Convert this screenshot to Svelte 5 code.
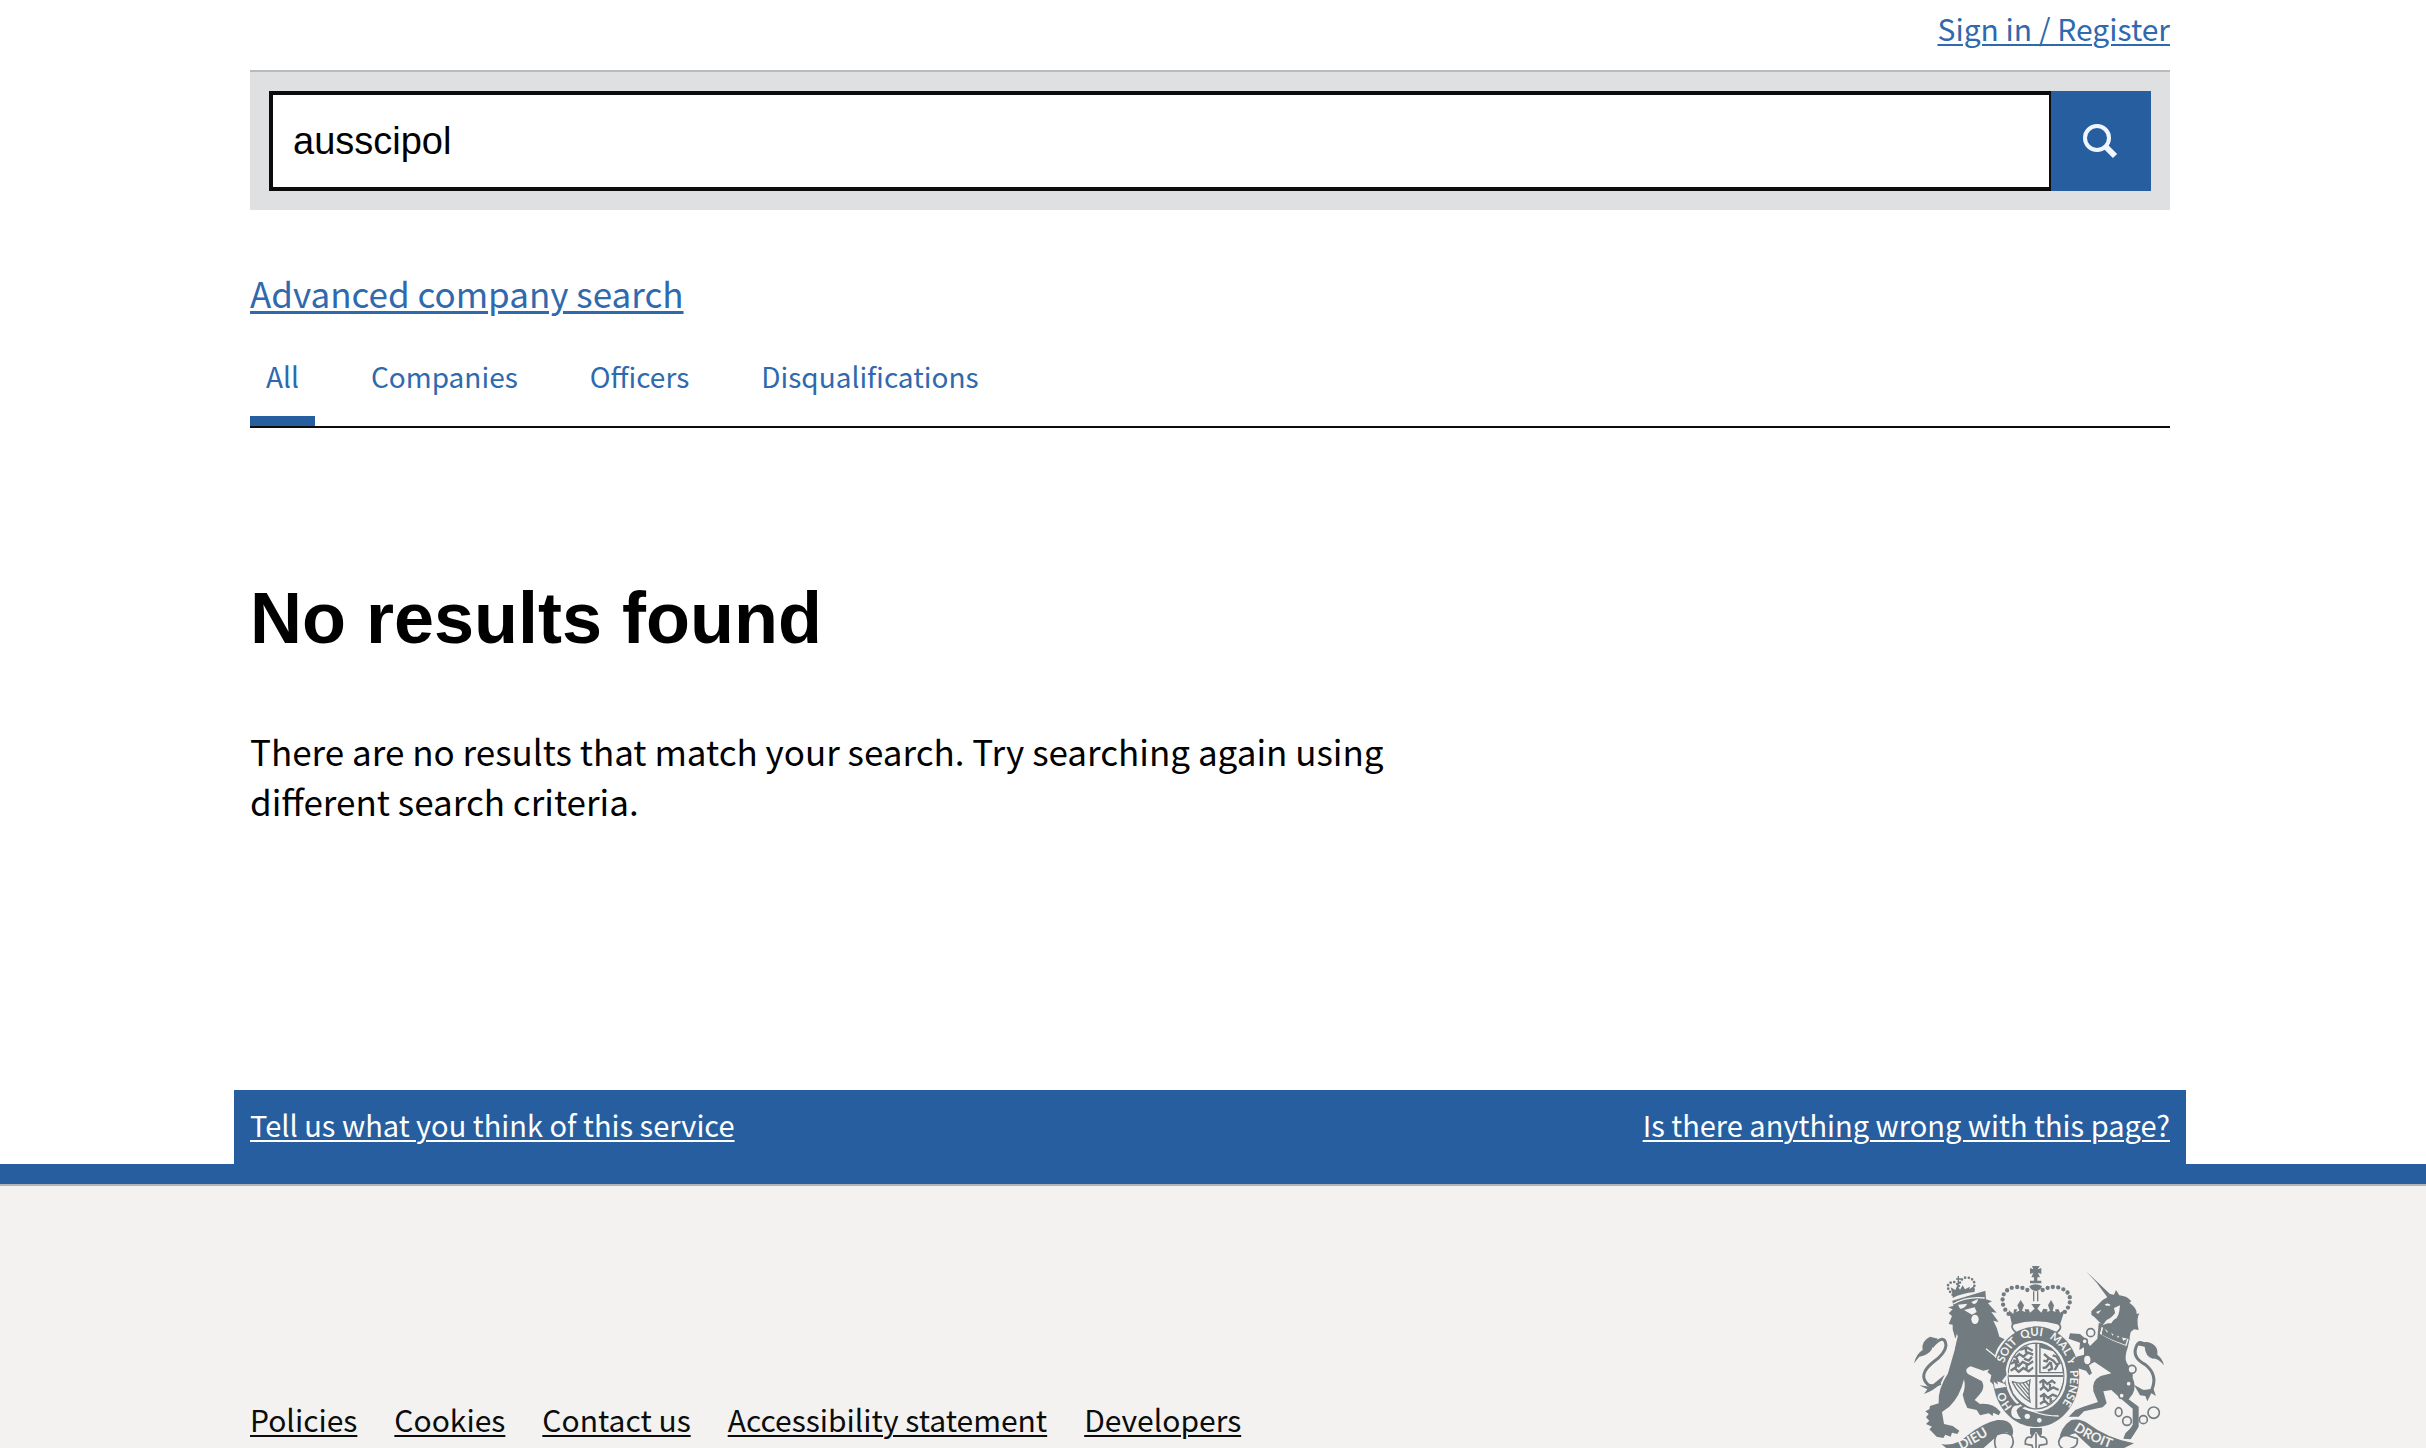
<script lang="ts">
	let searchTerm = $state('ausscipol');

	const tabs = ['All', 'Companies', 'Officers', 'Disqualifications'];
	let activeTab = $state('All');

	const footerLinks = ['Policies', 'Cookies', 'Contact us', 'Accessibility statement', 'Developers'];
</script>

<div class="page">
	<div class="gutter">
		<div class="container">
			<div class="account"><a href="#signin">Sign in / Register</a></div>

			<form class="search" onsubmit={(e) => e.preventDefault()}>
				<input type="text" aria-label="Search the register" bind:value={searchTerm} />
				<button aria-label="Search">
					<svg viewBox="0 0 40 40" width="40" height="40" fill="none" stroke="#f0f6ff">
						<circle cx="16" cy="17" r="12" stroke-width="4" />
						<path d="M25 26L34 35" stroke-width="6" />
					</svg>
				</button>
			</form>

			<a class="advanced" href="#advanced">Advanced company search</a>

			<nav class="tabs">
				{#each tabs as tab}
					<a href="#{tab}" class:active={tab === activeTab} onclick={() => (activeTab = tab)}>{tab}</a>
				{/each}
			</nav>

			<main>
				<h1>No results found</h1>
				<p>There are no results that match your search. Try searching again using different search criteria.</p>
			</main>
		</div>

		<div class="feedback">
			<a href="#feedback">Tell us what you think of this service</a>
			<a href="#problem">Is there anything wrong with this page?</a>
		</div>
	</div>

	<footer>
		<div class="gutter">
			<div class="container footer-row">
				<ul>
					{#each footerLinks as link}
						<li><a href="#footer">{link}</a></li>
					{/each}
				</ul>
				<svg class="crest" viewBox="102 78 750 546" width="250" height="182" role="img" aria-label="Royal coat of arms">
					<defs>
						<path id="garter" d="M402 505A102 124 0 1 1 528 512" />
						<path id="motto-left" d="M243 630Q300 604 352 566" />
						<path id="motto-right" d="M580 570Q636 608 712 632" />
					</defs>

					<!-- lion -->
					<path class="ink" d="M217 182L316 152L318 178L336 184L324 190L350 218L334 216L356 246L340 242Q352 262 358 290L374 298Q348 322 344 352L376 384L380 404L366 424L374 434L352 424L354 434L342 428L344 438L330 424L334 406L322 396L328 388L310 392L272 379Q250 388 264 402L306 424Q316 444 300 462L284 480L300 492Q340 488 362 516L356 526L340 518L338 528L326 520L300 526L290 510L262 504L254 486L248 464Q258 440 252 418Q240 470 208 500L186 516L192 552L218 558L238 572L232 582L216 578L212 590L196 584L190 594L170 590L148 568L156 560L138 552L148 542L138 532L146 522L136 514L148 508L150 498L176 490Q172 450 204 400L224 330L232 278L226 296L218 268L218 254L206 252L216 228L206 220L218 208L204 202L220 198Z" />
					<path class="tail" d="M156 320Q194 278 198 316Q196 340 160 366Q112 404 144 434Q156 442 182 430" />
					<path class="ink" d="M102 370Q110 340 128 330Q122 304 150 290L174 296Q160 312 154 330Q144 346 118 350ZM118 436L150 440L194 404L182 430Q162 452 132 462L142 448Z" />
					<path class="paper" d="M234 194L262 191Q254 206 240 206ZM274 186L294 177Q292 192 280 192ZM252 210L284 202L290 216L276 224L262 216Z" />
					<ellipse class="paper" cx="285" cy="238" rx="11" ry="14" />
					<path class="gap" d="M318 326L350 352M232 286Q220 340 208 360M220 192Q260 168 314 174" />

					<!-- lion's crown -->
					<path class="ink" d="M218 164L212 142L226 150L232 136L240 149L248 136L255 148L270 140L268 148L282 138L284 156Q244 160 218 174Z" />
					<path class="beads" d="M218 164Q192 138 212 128Q228 120 236 140Q242 112 262 112Q292 118 280 150" />
					<path class="stroke" d="M235 108V134M228 117H244" />

					<!-- crown -->
					<path class="ink" d="M456 78H479L473 88L484 84V102L474 98L480 112H454L460 98L450 102V84L460 88ZM462 110H472V122H484V130H450V122H462ZM448 138Q466 128 486 138Q484 150 468 154Q450 150 448 138Z" />
					<path class="beads big" d="M442 150Q422 138 400 142Q356 154 372 204L386 222M488 150Q510 138 534 142Q582 154 566 200L550 222" />
					<path class="stroke" d="M461 154V184M473 154V184" />
					<path class="ink" d="M386 210L400 222L402 208L412 208L408 216L418 212L412 196L422 180L432 196L426 212L436 216L434 208L446 208L450 218L464 206L454 192H482L472 206L484 218L490 206L502 208L502 216L510 212L504 196L513 180L522 196L518 212L526 216L526 208L536 208L540 218L554 210L540 254Q468 234 396 254Z" />
					<path class="outline" d="M408 278Q386 258 404 250Q468 232 532 250Q552 260 530 278Q468 258 408 278Z" />

					<!-- shield inside the garter -->
					<ellipse class="ink" cx="468" cy="410" rx="130" ry="151" />
					<ellipse class="ring" cx="468" cy="408" rx="89" ry="104" />
					<clipPath id="shield"><ellipse cx="468" cy="408" rx="82" ry="97" /></clipPath>
					<g clip-path="url(#shield)">
						<path class="paper" d="M382 312H462V404H382ZM482 324L520 334L544 366L548 396H482ZM382 412H462V508Q420 490 400 460ZM476 414H552V420L522 500L476 508Z" />
						<path class="beast" d="M396 346L408 352L418 342L430 350L444 338L460 344M400 360L414 366L410 354M432 356L446 362L456 350M390 372L404 366L416 378L428 366L444 374L460 364M392 392L404 384L416 396L430 384L446 394L460 382M408 384V372M440 386V374M420 330L440 322L458 332M438 322V338" />
						<path class="beast" d="M492 342L506 354L500 364L490 362M506 354L520 362L532 376L524 390M512 366L498 382L488 384M512 366L516 386L504 392M528 376L540 368L530 350L518 346" />
						<path class="beast" d="M478 428L490 420L502 432L516 422L526 430M480 450L492 440L504 452L520 442L536 450M480 470L492 462L504 474L518 464L532 470M480 492L494 482L506 494L522 482M490 420V440M510 432V446M492 462V480M512 474V486" />
						<path class="stroke" d="M396 424Q424 436 450 420Q444 460 450 486Q418 468 396 424M408 430L446 476M418 430L448 466M428 428L448 454M438 426L448 440" />
						<path class="cross" d="M384 408H552M469 312V508" />
						<path class="cross-line" d="M384 408H552M469 312V508" />
					</g>
					<text class="garter"><textPath href="#garter" startOffset="6">HO</textPath></text>
					<text class="garter"><textPath href="#garter" startOffset="144">SOIT</textPath></text>
					<text class="garter"><textPath href="#garter" startOffset="236">QUI</textPath></text>
					<text class="garter"><textPath href="#garter" startOffset="320">MAL</textPath></text>
					<text class="garter"><textPath href="#garter" startOffset="402">Y</textPath></text>
					<text class="garter"><textPath href="#garter" startOffset="438">PENSE</textPath></text>
					<path class="paper" d="M336 384L352 372L386 400L372 430L380 440L344 446Z" />
					<path class="ink" d="M318 360L344 352L376 384L380 404L366 422L374 432L352 424L354 434L340 424L330 380Z" />
					<path class="gap" d="M426 500Q480 528 536 528" />
					<path class="outline" d="M392 510Q396 492 414 494Q424 486 430 500Q418 502 412 512Q416 528 428 538Q412 542 402 536Q388 530 392 510Z" />
					<circle class="paper" cx="442" cy="529" r="8" />
					<circle class="paper" cx="478" cy="541" r="7" />

					<!-- unicorn -->
					<path class="ink" d="M618 94L690 162L702 164L708 150L718 166Q742 168 754 184L748 188Q772 204 770 222L778 220Q768 236 776 270L762 268L752 276L744 320Q732 352 740 368Q762 396 758 414Q770 440 758 462L746 478L776 500L776 560L764 580L752 598L730 596L736 580L750 566L758 554L758 506L718 472L694 450L670 454L680 490L668 502L612 514L596 530H566L586 510L610 500L654 486L640 454Q634 422 662 408L694 400L644 366L626 374L636 400L628 406L618 392L598 386L576 376L590 350L612 344L612 322L598 330L600 308L566 296L570 280L600 282L614 294L630 318L652 296L656 250L694 250L718 214L720 196L702 204L706 222L676 252L660 248L644 232L634 224V214L644 204L668 180L682 172L650 128Z" />
					<path class="paper" d="M674 194Q686 186 692 196Q682 200 674 194ZM648 216L664 210L654 222ZM712 204Q722 216 710 234Q692 248 668 256L680 240Q704 230 712 204Z" />
					<path class="collar" d="M664 258Q700 288 748 296L740 320Q696 306 658 282Z" />
					<path class="ink" d="M666 276L670 262L682 278L686 262L698 288L704 272L714 294L722 284L730 302L742 296L736 314Q698 302 666 284Z" />
					<path class="tail" d="M812 330Q778 290 768 322Q756 352 796 374Q834 404 816 448Q806 464 786 452" />
					<path class="ink" d="M772 316Q786 304 802 306Q836 314 832 344Q848 356 852 376Q834 354 818 356Q796 350 794 320ZM762 434L790 450L820 446L828 468L814 460L802 484L796 468L780 466Z" />
					<g class="chain">
						<circle cx="632" cy="278" r="12" />
						<circle cx="614" cy="304" r="8" />
						<ellipse cx="622" cy="360" rx="12" ry="15" />
						<circle cx="756" cy="388" r="12" />
						<circle cx="746" cy="431" r="8" />
						<circle cx="725" cy="467" r="8" />
						<ellipse cx="716" cy="516" rx="10" ry="13" />
						<circle cx="741" cy="543" r="13" />
						<circle cx="790" cy="539" r="12" />
						<circle cx="821" cy="518" r="17" />
					</g>

					<!-- motto scroll and rose -->
					<path class="ink" d="M184 612Q228 620 260 588Q310 548 352 540Q384 538 394 556Q404 574 396 588L380 576Q360 578 342 596L304 630H206Z" />
					<path class="outline" d="M350 584Q376 572 394 586Q408 610 388 630H350Q338 604 350 584Z" />
					<path class="ink" d="M536 604Q542 560 574 540Q602 534 626 552Q680 594 762 610L720 630H640L586 580Q562 582 552 610Z" />
					<path class="outline" d="M536 606Q540 586 560 586L592 596Q594 612 584 620L560 630Q536 624 536 606Z" />
					<text class="motto"><textPath href="#motto-left">DIEU</textPath></text>
					<text class="motto"><textPath href="#motto-right">DROIT</textPath></text>
					<path class="ink" d="M450 564H486V580L478 600H460L450 580Z" />
					<path class="outline" d="M468 570L482 590Q504 590 500 612L478 616L476 630H460L456 616L436 612Q434 588 454 592ZM468 580V626" />
				</svg>
			</div>
		</div>
	</footer>
</div>

<style>
	:global(body) {
		margin: 0;
		background: #fff;
	}
	.page {
		font-family: 'Noto Sans CJK SC', 'Liberation Sans', sans-serif;
		font-size: 30px;
		line-height: 40px;
		color: #0b0c0c;
	}
	.gutter {
		padding-right: 6px;
	}
	.container {
		max-width: 1920px;
		margin: 0 auto;
	}
	a {
		color: #2f69ae;
		text-decoration-thickness: 2px;
		text-underline-offset: 3px;
	}
	.account {
		padding: 8px 0 22px;
		text-align: right;
	}
	.search {
		display: flex;
		padding: 19px;
		background: #dee0e2;
		border-top: 2px solid #b8babc;
	}
	input {
		flex: 1;
		min-width: 0;
		box-sizing: border-box;
		height: 100px;
		padding: 0 20px;
		border: 4px solid #0b0c0c;
		border-right-width: 2px;
		border-radius: 0;
		background: #fff;
		color: #000;
		font-family: 'Liberation Sans', Arial, sans-serif;
		font-size: 38px;
	}
	button {
		display: flex;
		align-items: center;
		justify-content: center;
		width: 100px;
		height: 100px;
		padding: 0;
		border: none;
		background: #265e9f;
	}
	.advanced {
		display: inline-block;
		margin-top: 58px;
		font-size: 35px;
		line-height: 50px;
		text-decoration-thickness: 3px;
	}
	.tabs {
		display: flex;
		gap: 40px;
		margin-top: 32px;
		border-bottom: 2px solid #0b0c0c;
		font-size: 28px;
	}
	.tabs a {
		padding: 6px 16px 20px;
		border-bottom: 10px solid transparent;
		text-decoration: none;
	}
	.tabs a.active {
		border-bottom-color: #265e9f;
	}
	main {
		padding: 150px 0 264px;
	}
	h1 {
		margin: 0 0 68px;
		font-family: 'Liberation Sans', Arial, sans-serif;
		font-size: 72px;
		line-height: 80px;
		color: #000;
	}
	p {
		max-width: 1240px;
		margin: 0;
		font-size: 35px;
		line-height: 50px;
		color: #000;
	}
	.feedback {
		display: flex;
		justify-content: space-between;
		box-sizing: border-box;
		max-width: 1952px;
		margin: 0 auto;
		padding: 14px 16px 20px;
		background: #265e9f;
		font-size: 29px;
	}
	.feedback a {
		color: #fff;
	}
	footer {
		border-top: 20px solid #265e9f;
		background: #f3f2f1;
	}
	footer > .gutter {
		border-top: 2px solid #b1b4b6;
	}
	.footer-row {
		display: flex;
		justify-content: space-between;
		align-items: flex-end;
		padding-top: 80px;
	}
	ul {
		display: flex;
		flex-wrap: wrap;
		column-gap: 37px;
		margin: 0;
		padding: 0 0 9px;
		list-style: none;
	}
	li a {
		color: #0b0c0c;
	}
	.crest {
		flex: none;
		margin-right: 6px;
	}
	.ink {
		fill: #727b7f;
	}
	.paper {
		fill: #f3f2f1;
	}
	.outline {
		fill: #f3f2f1;
		stroke: #727b7f;
		stroke-width: 5;
	}
	.tail {
		fill: none;
		stroke: #727b7f;
		stroke-width: 9;
	}
	.gap {
		fill: none;
		stroke: #f3f2f1;
		stroke-width: 4;
	}
	.stroke,
	.beast {
		fill: none;
		stroke: #727b7f;
		stroke-width: 4;
	}
	.beast {
		stroke-width: 7;
	}
	.beads {
		fill: none;
		stroke: #727b7f;
		stroke-width: 8;
		stroke-linecap: round;
		stroke-dasharray: 0 11;
	}
	.big {
		stroke-width: 13;
		stroke-dasharray: 0 16;
	}
	.ring {
		fill: #727b7f;
		stroke: #f3f2f1;
		stroke-width: 7;
	}
	.cross {
		stroke: #f3f2f1;
		stroke-width: 17;
	}
	.cross-line {
		stroke: #727b7f;
		stroke-width: 6;
	}
	.collar {
		fill: #f3f2f1;
		stroke: #727b7f;
		stroke-width: 3;
	}
	.chain {
		fill: #f3f2f1;
		stroke: #727b7f;
		stroke-width: 5;
	}
	text {
		fill: #f3f2f1;
		font-family: Lato, sans-serif;
		font-weight: 700;
	}
	.garter {
		font-size: 34px;
	}
	.motto {
		font-size: 40px;
	}
</style>
